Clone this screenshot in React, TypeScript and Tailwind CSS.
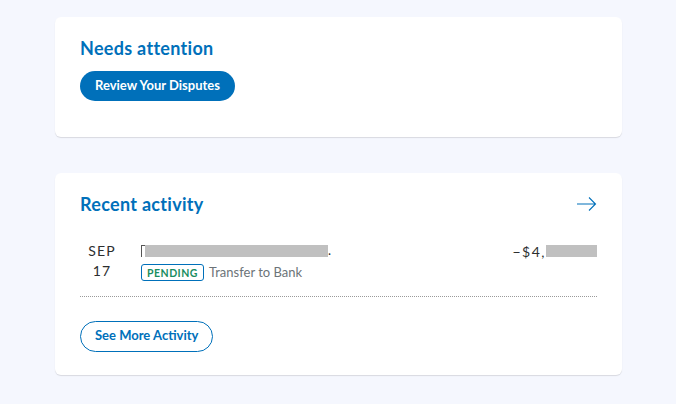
import React from "react";

export default function App() {
  return (
    <div className="min-h-[404px] w-[676px] bg-[#f5f7fe] pt-[17px] pl-[55px]" style={{ fontFamily: 'Lato, "Noto Sans", sans-serif' }}>
      <div className="flex w-[567px] flex-col gap-[36px]">
        <div className="h-[120px] rounded-md bg-white px-[25px] pt-[19px] shadow-[0_1px_1px_rgba(0,0,0,0.12)]">
          <h2 className="text-[18px] font-bold leading-[24px] tracking-[0.3px] text-[#0070ba]">Needs attention</h2>
          <button className="mt-[11px] h-[30px] rounded-full bg-[#0070ba] px-[15px] text-[13px] font-bold text-white">Review Your Disputes</button>
        </div>
        <div className="h-[202px] rounded-md bg-white px-[25px] pt-[19px] shadow-[0_1px_1px_rgba(0,0,0,0.12)]">
          <div className="flex items-center justify-between">
            <h2 className="text-[18px] font-bold leading-[24px] tracking-[0.3px] text-[#0070ba]">Recent activity</h2>
            <svg width="20" height="16" viewBox="0 0 20 16" fill="none" stroke="#0070ba" strokeWidth="1.1">
              <path d="M0 8h18.5M12 1.5l6.5 6.5L12 14.5" />
            </svg>
          </div>
          <div className="mt-[25px] flex border-b border-dotted border-[#9a9a9a] pb-[13px]">
            <div className="flex w-[44px] flex-col items-center text-[14px] leading-[20px] tracking-[1.2px] text-[#2c2e2f]">
              <span>SEP</span>
              <span>17</span>
            </div>
            <div className="ml-[17px] flex flex-1 flex-col">
              <div className="flex h-[20px] items-center text-[13px] text-[#2c2e2f]">
                <span className="inline-block h-[12px] w-[4px] border-l border-t border-[#555]"></span>
                <span className="inline-block h-[12px] w-[183px] bg-[#c0c0c0]"></span>
                <span>.</span>
              </div>
              <div className="mt-[2px] flex items-center gap-[5px]">
                <span className="flex h-[17px] items-center rounded-[3px] border border-[#0070ba] px-[5px] text-[10.5px] font-bold leading-none tracking-[0.5px] text-[#1a8e5f]">PENDING</span>
                <span className="text-[13px] text-[#6c7378]">Transfer to Bank</span>
              </div>
            </div>
            <div className="flex h-[20px] items-center text-[14px] tracking-[1.5px] text-[#2c2e2f]">
              <span>−$4,</span>
              <span className="inline-block h-[12px] w-[51px] bg-[#c0c0c0]"></span>
            </div>
          </div>
          <button className="mt-[24px] h-[31px] rounded-full border border-[#0070ba] px-[14px] text-[13px] font-bold text-[#0070ba]">See More Activity</button>
        </div>
      </div>
    </div>
  );
}
